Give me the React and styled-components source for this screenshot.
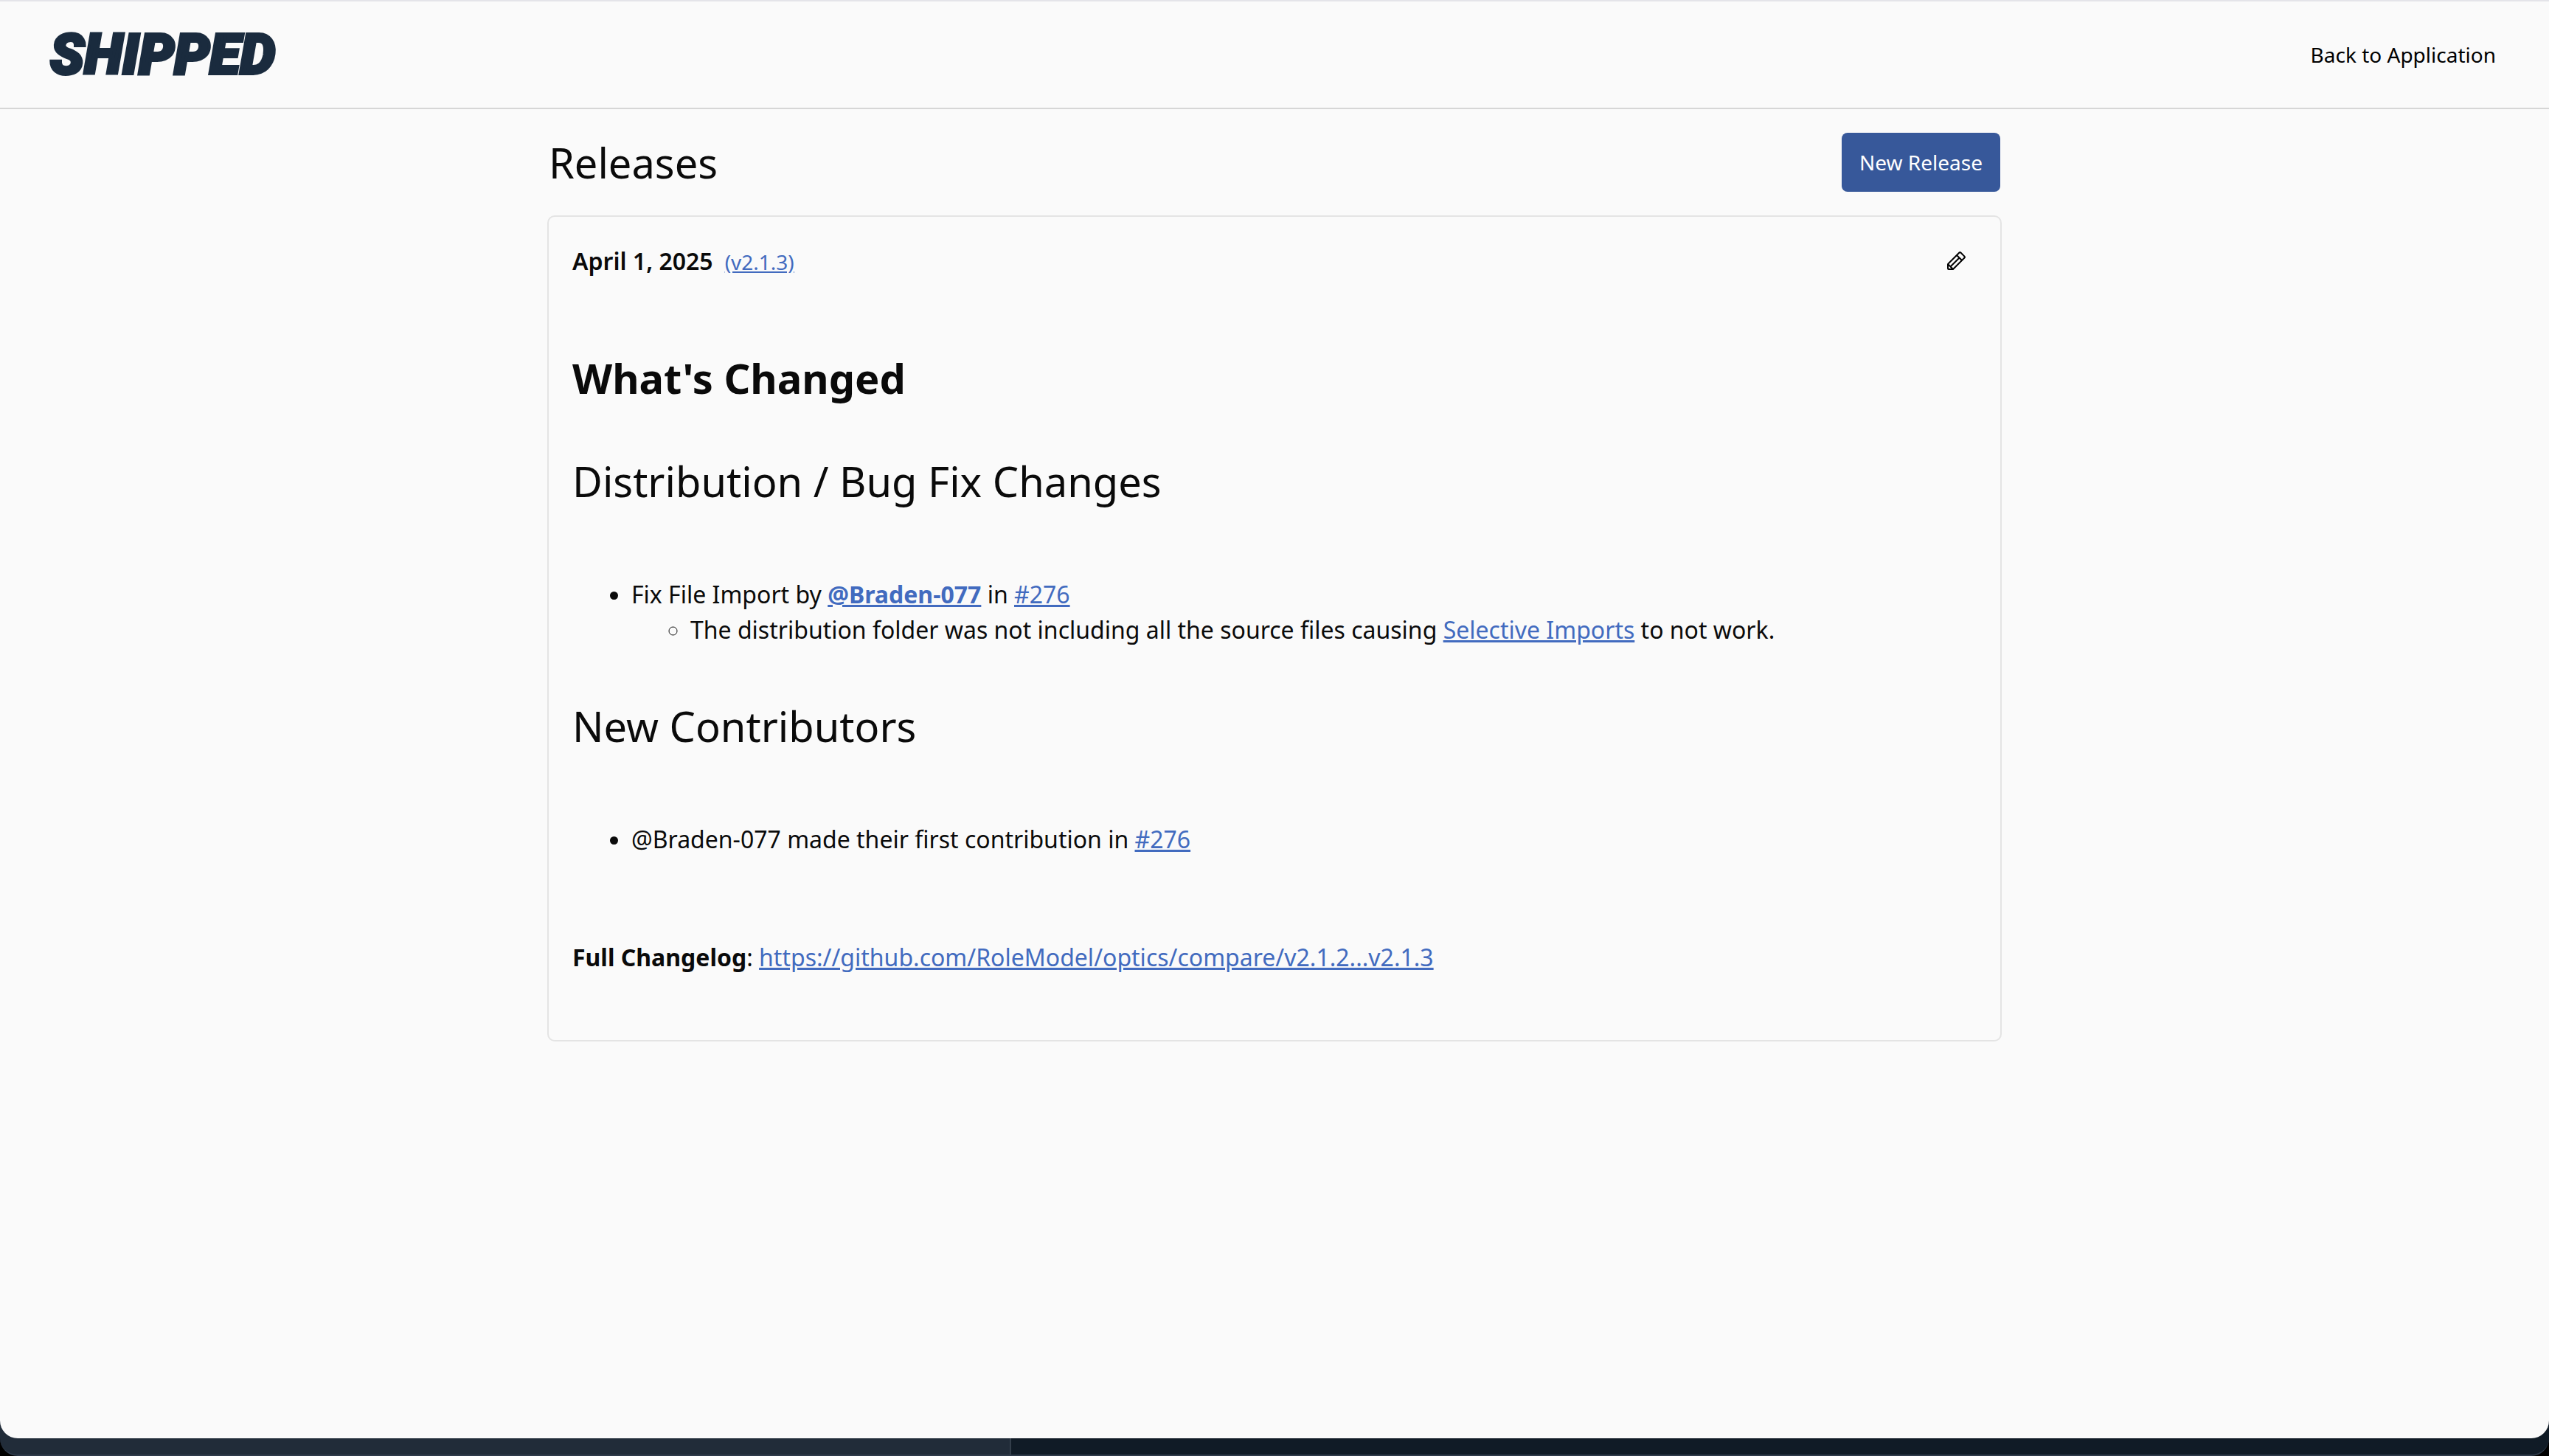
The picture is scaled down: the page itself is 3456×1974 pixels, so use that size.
import React from "react";
import styled, { createGlobalStyle } from "styled-components";
import { PiPencil } from "react-icons/pi";

const GlobalStyle = createGlobalStyle`
  *, *::before, *::after { box-sizing: border-box; }
  body {
    margin: 0;
    background: #000;
    color: #0a0a0a;
    font-family: "Noto Sans", sans-serif;
    font-size: 32px;
    line-height: 48px;
  }
`;

const Desktop = styled.div`
  min-height: 100vh;
  display: flex;
  flex-direction: column;
  padding-bottom: 22px;
  border-bottom: 2px solid #2f3b4b;
  border-radius: 0 0 24px 24px;
  background: linear-gradient(90deg, #212c39 1369px, #333e4a 1369px, #333e4a 1371px, #101b26 1371px);
`;

const Window = styled.div`
  flex: 1;
  background: #fafafa;
  border-top: 2px solid #e4e4e9;
  border-radius: 0 0 24px 24px;
`;

const Header = styled.header`
  display: flex;
  align-items: center;
  justify-content: space-between;
  height: 146px;
  padding: 0 72px 0 68px;
  border-bottom: 2px solid #d6d6d6;
`;

const Logo = styled.a`
  color: #1a2b3e;
  font-family: Roboto, sans-serif;
  font-size: 76px;
  font-style: italic;
  font-weight: 900;
  line-height: 80px;
  text-decoration: none;
  -webkit-text-stroke: 4px #1a2b3e;
`;

const NavLink = styled.a`
  color: #000;
  font-size: 28px;
  font-weight: 400;
  line-height: 40px;
  text-decoration: none;
`;

const Main = styled.main`
  display: flex;
  flex-direction: column;
  gap: 32px;
  max-width: 1972px;
  margin: 0 auto;
  padding: 32px 0;
`;

const TitleRow = styled.div`
  display: flex;
  align-items: center;
  justify-content: space-between;
  padding: 0 2px;
`;

const Title = styled.h1`
  margin: 0;
  font-size: 56px;
  font-weight: 400;
  line-height: 72px;
`;

const PrimaryButton = styled.button`
  height: 80px;
  padding: 0 24px;
  border: 0;
  border-radius: 8px;
  background: #37589a;
  color: #fff;
  font: 400 28px/40px "Noto Sans", sans-serif;
`;

const Card = styled.article`
  padding: 32px;
  border: 2px solid #e4e4e4;
  border-radius: 10px;
`;

const CardHeader = styled.header`
  display: flex;
  align-items: center;
  justify-content: space-between;
`;

const ReleaseInfo = styled.div`
  display: flex;
  align-items: baseline;
  gap: 16px;
  font-weight: 600;
`;

const IconButton = styled.button`
  display: grid;
  place-items: center;
  width: 56px;
  height: 56px;
  padding: 0;
  border: 0;
  background: none;
  color: #000;
  font-size: 32px;
`;

const TextLink = styled.a`
  color: #426bbf;
  font-size: ${(p) => (p.$small ? "28px" : "inherit")};
  font-weight: ${(p) => (p.$strong ? 700 : 400)};
`;

const Notes = styled.div`
  padding: 96px 0 56px;
`;

const NotesHeading = styled.h2`
  margin: 0 0 ${(p) => (p.$strong ? 72 : 96)}px;
  font-size: 56px;
  font-weight: ${(p) => (p.$strong ? 700 : 400)};
  line-height: 68px;
`;

const List = styled.ul`
  margin: 0 0 ${(p) => p.$after || 0}px;
  padding-left: 80px;
`;

const Paragraph = styled.p`
  margin: 0;
`;

export default function App() {
  return (
    <>
      <GlobalStyle />
      <Desktop>
        <Window>
          <Header>
            <Logo href="#">SHIPPED</Logo>
            <NavLink href="#">Back to Application</NavLink>
          </Header>
          <Main>
            <TitleRow>
              <Title>Releases</Title>
              <PrimaryButton type="button">New Release</PrimaryButton>
            </TitleRow>
            <Card>
              <CardHeader>
                <ReleaseInfo>
                  <time dateTime="2025-04-01">April 1, 2025</time>
                  <TextLink $small href="#">(v2.1.3)</TextLink>
                </ReleaseInfo>
                <IconButton type="button" aria-label="Edit release">
                  <PiPencil />
                </IconButton>
              </CardHeader>
              <Notes>
                <NotesHeading $strong>What's Changed</NotesHeading>
                <NotesHeading>Distribution / Bug Fix Changes</NotesHeading>
                <List $after={72}>
                  <li>
                    Fix File Import by <TextLink $strong href="#">@Braden-077</TextLink> in{" "}
                    <TextLink href="#">#276</TextLink>
                    <List>
                      <li>
                        The distribution folder was not including all the source files causing{" "}
                        <TextLink href="#">Selective Imports</TextLink> to not work.
                      </li>
                    </List>
                  </li>
                </List>
                <NotesHeading>New Contributors</NotesHeading>
                <List $after={112}>
                  <li>
                    @Braden-077 made their first contribution in <TextLink href="#">#276</TextLink>
                  </li>
                </List>
                <Paragraph>
                  <strong>Full Changelog</strong>:{" "}
                  <TextLink href="#">https://github.com/RoleModel/optics/compare/v2.1.2...v2.1.3</TextLink>
                </Paragraph>
              </Notes>
            </Card>
          </Main>
        </Window>
      </Desktop>
    </>
  );
}
